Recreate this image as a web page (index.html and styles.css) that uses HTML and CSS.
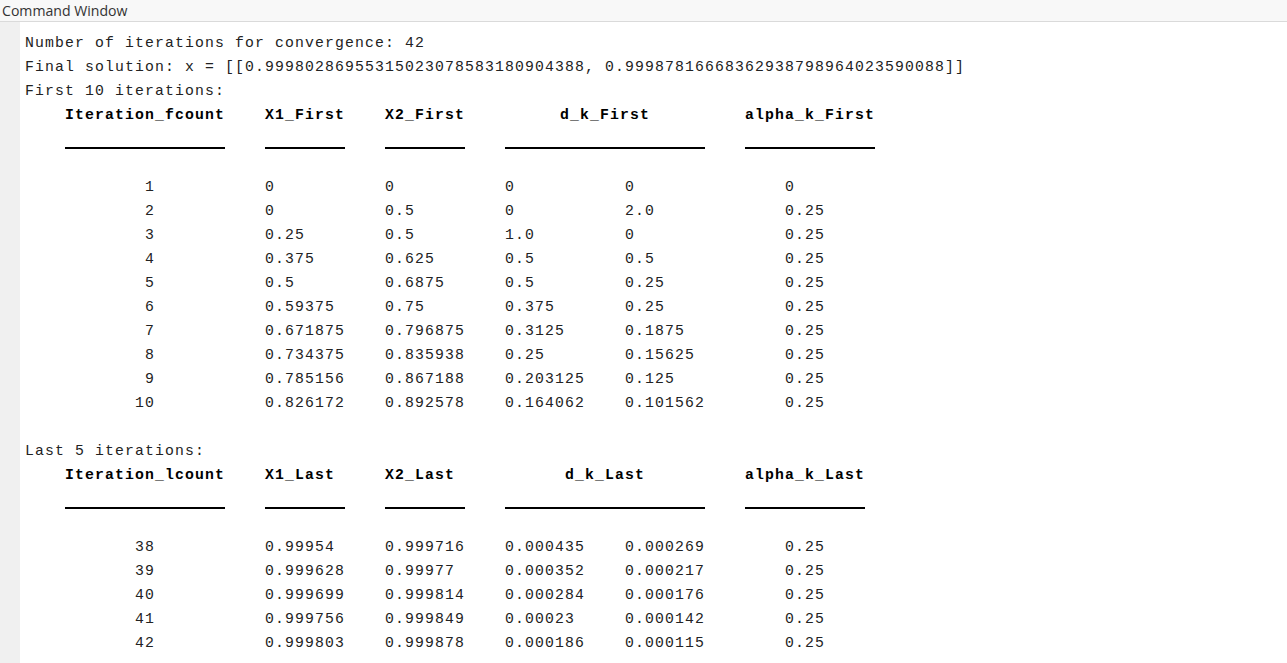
FILE: index.html
```html
<!DOCTYPE html>
<html>
<head>
<meta charset="utf-8">
<link rel="stylesheet" href="styles.css">
</head>
<body>
<div class="titlebar">Command Window</div>
<div class="main">
  <div class="gutter"></div>
  <div class="output">
    <div class="line">Number of iterations for convergence: 42</div>
    <div class="line">Final solution: x = [[0.99980286955315023078583180904388, 0.99987816668362938798964023590088]]</div>
    <div class="line">First 10 iterations:</div>
    <div class="tbl">
      <div class="th">Iteration_fcount</div>
      <div class="th">X1_First</div>
      <div class="th">X2_First</div>
      <div class="th span2">d_k_First</div>
      <div class="th">alpha_k_First</div>

      <div class="n">1</div><div>0</div><div>0</div><div>0</div><div>0</div><div class="a">0</div>
      <div class="n">2</div><div>0</div><div>0.5</div><div>0</div><div>2.0</div><div class="a">0.25</div>
      <div class="n">3</div><div>0.25</div><div>0.5</div><div>1.0</div><div>0</div><div class="a">0.25</div>
      <div class="n">4</div><div>0.375</div><div>0.625</div><div>0.5</div><div>0.5</div><div class="a">0.25</div>
      <div class="n">5</div><div>0.5</div><div>0.6875</div><div>0.5</div><div>0.25</div><div class="a">0.25</div>
      <div class="n">6</div><div>0.59375</div><div>0.75</div><div>0.375</div><div>0.25</div><div class="a">0.25</div>
      <div class="n">7</div><div>0.671875</div><div>0.796875</div><div>0.3125</div><div>0.1875</div><div class="a">0.25</div>
      <div class="n">8</div><div>0.734375</div><div>0.835938</div><div>0.25</div><div>0.15625</div><div class="a">0.25</div>
      <div class="n">9</div><div>0.785156</div><div>0.867188</div><div>0.203125</div><div>0.125</div><div class="a">0.25</div>
      <div class="n">10</div><div>0.826172</div><div>0.892578</div><div>0.164062</div><div>0.101562</div><div class="a">0.25</div>
    </div>
    <div class="line blank"></div>
    <div class="line">Last 5 iterations:</div>
    <div class="tbl">
      <div class="th">Iteration_lcount</div>
      <div class="th">X1_Last</div>
      <div class="th">X2_Last</div>
      <div class="th span2">d_k_Last</div>
      <div class="th">alpha_k_Last</div>

      <div class="n">38</div><div>0.99954</div><div>0.999716</div><div>0.000435</div><div>0.000269</div><div class="a">0.25</div>
      <div class="n">39</div><div>0.999628</div><div>0.99977</div><div>0.000352</div><div>0.000217</div><div class="a">0.25</div>
      <div class="n">40</div><div>0.999699</div><div>0.999814</div><div>0.000284</div><div>0.000176</div><div class="a">0.25</div>
      <div class="n">41</div><div>0.999756</div><div>0.999849</div><div>0.00023</div><div>0.000142</div><div class="a">0.25</div>
      <div class="n">42</div><div>0.999803</div><div>0.999878</div><div>0.000186</div><div>0.000115</div><div class="a">0.25</div>
    </div>
  </div>
</div>
</body>
</html>
```
FILE: styles.css
```css
html, body {
  margin: 0;
  padding: 0;
  background: #ffffff;
  height: 100%;
  overflow: hidden;
}
body {
  display: flex;
  flex-direction: column;
}
.titlebar {
  height: 21px;
  line-height: 21px;
  background: #f8f8f8;
  border-bottom: 1px solid #dadada;
  font-family: "Open Sans", "Noto Sans", sans-serif;
  font-size: 14.1px;
  color: #333333;
  padding-left: 2px;
  flex: none;
}
.main {
  flex: 1;
  display: flex;
}
.gutter {
  width: 20px;
  background: #f0f0f0;
  flex: none;
}
.output {
  padding: 9px 0 0 5px;
  font-family: "Liberation Mono", "DejaVu Sans Mono", monospace;
  font-size: 14.8px;
  letter-spacing: 1.12px;
  line-height: 24px;
  color: #222222;
}
.line {
  height: 24px;
  white-space: pre;
}
.tbl {
  display: grid;
  grid-template-columns: 160px 80px 80px 80px 80px max-content;
  column-gap: 40px;
  margin-left: 40px;
  justify-content: start;
}
.tbl > div {
  height: 24px;
  white-space: pre;
}
.tbl > .th {
  font-weight: bold;
  color: #000000;
  height: 24px;
  padding-bottom: 20px;
  border-bottom: 2px solid #000000;
  margin-bottom: 26px;
}
.tbl > .span2 {
  grid-column: span 2;
  text-align: center;
}
.tbl > .n {
  text-align: right;
  padding-right: 70px;
}
.tbl > .a {
  padding-left: 40px;
}
```
